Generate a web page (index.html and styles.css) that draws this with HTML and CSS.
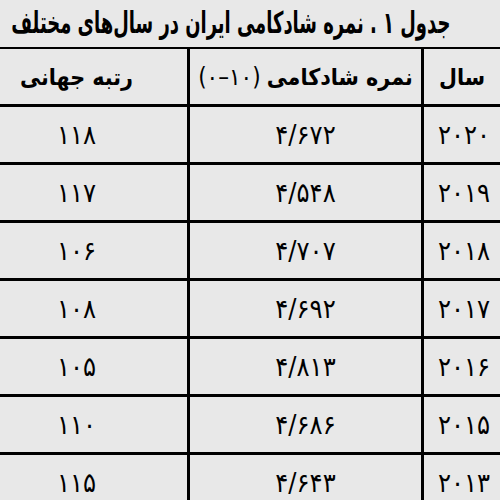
FILE: index.html
```html
<!DOCTYPE html>
<html lang="fa" dir="rtl">
<head>
<meta charset="utf-8">
<title>جدول ۱</title>
<link rel="stylesheet" href="styles.css">
</head>
<body>
<div class="page">
  <div class="title-row">
    <h1 class="title">جدول ۱ . نمره شادکامی ایران در سال‌های مختلف</h1>
  </div>
  <div class="table">
    <div class="cell head">سال</div>
    <div class="cell head">نمره شادکامی <span class="range">(۱۰–۰)</span></div>
    <div class="cell head">رتبه جهانی</div>

    <div class="cell year">۲۰۲۰</div>
    <div class="cell">۴/۶۷۲</div>
    <div class="cell">۱۱۸</div>

    <div class="cell year">۲۰۱۹</div>
    <div class="cell">۴/۵۴۸</div>
    <div class="cell">۱۱۷</div>

    <div class="cell year">۲۰۱۸</div>
    <div class="cell">۴/۷۰۷</div>
    <div class="cell">۱۰۶</div>

    <div class="cell year">۲۰۱۷</div>
    <div class="cell">۴/۶۹۲</div>
    <div class="cell">۱۰۸</div>

    <div class="cell year">۲۰۱۶</div>
    <div class="cell">۴/۸۱۳</div>
    <div class="cell">۱۰۵</div>

    <div class="cell year">۲۰۱۵</div>
    <div class="cell">۴/۶۸۶</div>
    <div class="cell">۱۱۰</div>

    <div class="cell year">۲۰۱۳</div>
    <div class="cell">۴/۶۴۳</div>
    <div class="cell">۱۱۵</div>
  </div>
</div>
</body>
</html>
```

FILE: styles.css
```css
html, body {
  margin: 0;
  padding: 0;
  background: #e8e8e8;
  overflow: hidden;
}

.page {
  width: 500px;
  height: 500px;
  overflow: hidden;
  direction: rtl;
  font-family: "DejaVu Sans Condensed", "DejaVu Sans", sans-serif;
  color: #000;
}

.title-row {
  height: 47px;
  box-sizing: border-box;
  padding: 4px 50px 0 0;
  overflow: hidden;
}

.title {
  display: inline-block;
  margin: 0;
  font-size: 30px;
  font-weight: bold;
  line-height: 38px;
  white-space: nowrap;
  transform: scaleX(0.665);
  transform-origin: right center;
}

.table {
  width: 534px;
  margin-left: -34px;
  display: grid;
  grid-template-columns: 76px 231px 221px;
  grid-auto-rows: 55px;
  column-gap: 3px;
  row-gap: 3px;
  padding-top: 2px;
  background: #000;
}

.cell {
  background: #e8e8e8;
  display: flex;
  align-items: center;
  justify-content: center;
  gap: 6px;
  font-size: 27px;
  white-space: nowrap;
}

.head {
  font-weight: bold;
  font-size: 23px;
}

.range {
  font-weight: normal;
  font-size: 24px;
}

.year {
  letter-spacing: 4px;
  padding-left: 4px;
}
```
